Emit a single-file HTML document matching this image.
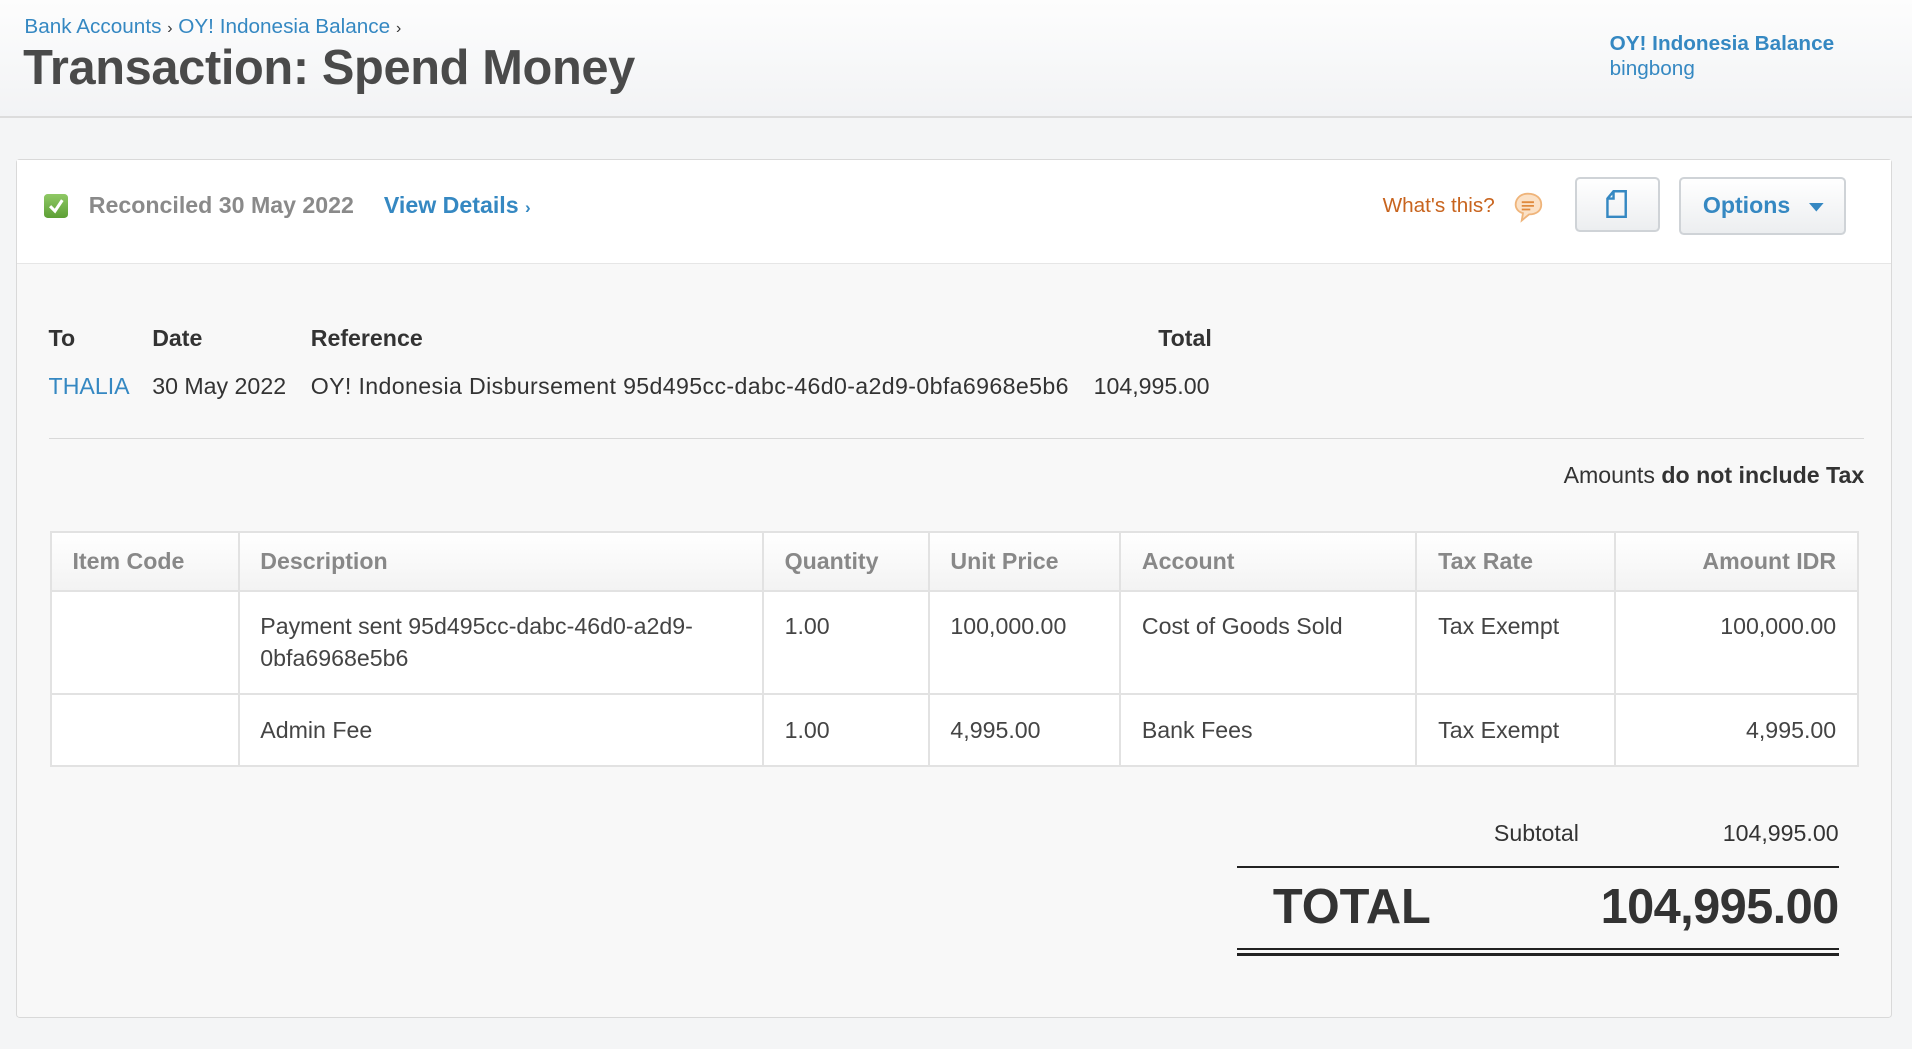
<!DOCTYPE html>
<html><head><meta charset="utf-8"><style>
html,body{margin:0;padding:0;}
body{width:1568px;height:860px;zoom:1.2194;background:#f4f5f6;font-family:"Liberation Sans",Arial,sans-serif;color:#333;position:relative;overflow:hidden;}
.abs{position:absolute;white-space:nowrap;}
.hdr{position:absolute;left:0;top:0;width:1568px;height:95px;background:linear-gradient(#fdfdfd,#f2f3f5);border-bottom:2px solid #dcdcdc;}
a,.blue{color:#3588c2;text-decoration:none;}
.panel{position:absolute;left:13px;top:130px;width:1537px;height:703px;border:1px solid #d9d9d9;border-radius:3px;background:#f8f8f8;}
.ptop{position:absolute;left:0;top:0;right:0;height:85px;background:#fff;border-bottom:1px solid #e6e6e6;}
table{position:absolute;left:27px;top:305px;width:1482px;table-layout:fixed;border-collapse:collapse;background:#fff;font-size:19px;}
td,th{border:2px solid #e2e2e2;padding:0 17px;text-align:left;vertical-align:top;overflow:hidden;}
th{height:46px;vertical-align:middle;color:#888;background:linear-gradient(#fff,#f3f3f3);font-weight:bold;}
td{color:#444;padding-top:16px;line-height:26px;}
.r{text-align:right;}
</style></head><body>
<div class="hdr"></div>
<div class="abs" style="left:20px;top:12px;font-size:17px;color:#333;"><a>Bank Accounts</a> <span style="font-size:13px">›</span> <a>OY! Indonesia Balance</a> <span style="font-size:13px">›</span></div>
<div class="abs" style="left:19px;top:33px;font-size:40px;font-weight:bold;color:#4a4a4a;letter-spacing:-0.3px;">Transaction: Spend Money</div>
<div class="abs blue" style="left:1320px;top:26px;font-size:17px;font-weight:bold;">OY! Indonesia Balance</div>
<div class="abs blue" style="left:1320px;top:47px;font-size:17px;">bingbong</div>

<div class="panel">
 <div class="ptop">
  <div class="abs" style="left:22px;top:28px;width:20px;height:20px;border-radius:3px;background:linear-gradient(#8fc965,#5d9f35);"><svg width="20" height="20"><path d="M5 10 L9 14 L15 5" stroke="#fff" stroke-width="2.5" fill="none"/></svg></div>
  <div class="abs" style="left:59px;top:27px;font-size:19px;font-weight:bold;color:#8a8a8a;">Reconciled 30 May 2022</div>
  <div class="abs blue" style="left:301px;top:27px;font-size:19px;font-weight:bold;">View Details <span style="font-size:14px">›</span></div>
  <div class="abs" style="left:1120px;top:28px;font-size:17px;color:#c8641e;">What's this?</div>
  <svg class="abs" style="left:1226px;top:25px" width="26" height="28"><path d="M13 3 C20 3 24 7 24 12 C24 17 20 20 14 20 L8 25 L9 19 C5 18 3 15 3 12 C3 7 7 3 13 3Z" fill="#fbe1c6" stroke="#efb47a" stroke-width="1.5"/><path d="M8 10h10M8 13h10M8 16h7" stroke="#e08a3d" stroke-width="1.5"/></svg>
  <div class="abs" style="left:1278px;top:14px;width:66px;height:42px;border:2px solid #cfd3d7;border-radius:4px;background:linear-gradient(#fff,#eceef0);"><svg style="position:absolute;left:23px;top:9px" width="20" height="24"><path d="M7 1 H17 V22 H2 V7 Z M2 7 H7 V1" fill="none" stroke="#3588c2" stroke-width="2"/></svg></div>
  <div class="abs" style="left:1363px;top:14px;width:134px;height:45px;border:2px solid #cfd3d7;border-radius:4px;background:linear-gradient(#fff,#eceef0);"><span style="position:absolute;left:18px;top:11px;font-size:19px;font-weight:bold;color:#3588c2;">Options</span><svg style="position:absolute;left:105px;top:20px" width="12" height="8"><path d="M0 0 H12 L6 7Z" fill="#3588c2"/></svg></div>
 </div>
 <div class="abs" style="left:26px;top:136px;font-size:19px;font-weight:bold;">To</div>
 <div class="abs" style="left:111px;top:136px;font-size:19px;font-weight:bold;">Date</div>
 <div class="abs" style="left:241px;top:136px;font-size:19px;font-weight:bold;">Reference</div>
 <div class="abs" style="left:936px;top:136px;font-size:19px;font-weight:bold;">Total</div>
 <div class="abs blue" style="left:26px;top:175px;font-size:19px;">THALIA</div>
 <div class="abs" style="left:111px;top:175px;font-size:19px;">30 May 2022</div>
 <div class="abs" style="left:241px;top:175px;font-size:19px;letter-spacing:0.3px;">OY! Indonesia Disbursement 95d495cc-dabc-46d0-a2d9-0bfa6968e5b6</div>
 <div class="abs" style="left:883px;top:175px;font-size:19px;">104,995.00</div>
 <div class="abs" style="left:26px;top:228px;width:1489px;height:1px;background:#d9d9d9;"></div>
 <div class="abs" style="right:22px;top:248px;font-size:19px;">Amounts <b>do not include Tax</b></div>
 <table>
  <colgroup><col style="width:154px"><col style="width:430px"><col style="width:136px"><col style="width:157px"><col style="width:243px"><col style="width:163px"><col style="width:199px"></colgroup>
  <tr><th>Item Code</th><th>Description</th><th>Quantity</th><th>Unit Price</th><th>Account</th><th>Tax Rate</th><th class="r">Amount IDR</th></tr>
  <tr style="height:85px"><td></td><td>Payment sent 95d495cc-dabc-46d0-a2d9-<br>0bfa6968e5b6</td><td>1.00</td><td>100,000.00</td><td>Cost of Goods Sold</td><td>Tax Exempt</td><td class="r">100,000.00</td></tr>
  <tr style="height:59px"><td></td><td>Admin Fee</td><td>1.00</td><td>4,995.00</td><td>Bank Fees</td><td>Tax Exempt</td><td class="r">4,995.00</td></tr>
 </table>
 <div class="abs" style="right:256px;top:542px;font-size:19px;">Subtotal</div>
 <div class="abs" style="right:43px;top:542px;font-size:19px;">104,995.00</div>
 <div class="abs" style="left:1001px;top:579px;width:493px;height:2px;background:#222;"></div>
 <div class="abs" style="left:1030px;top:590px;font-size:40px;font-weight:bold;color:#333;">TOTAL</div>
 <div class="abs" style="right:43px;top:590px;font-size:40px;font-weight:bold;color:#333;letter-spacing:-0.5px;">104,995.00</div>
 <div class="abs" style="left:1001px;top:647px;width:493px;height:1px;background:#222;"></div>
 <div class="abs" style="left:1001px;top:651px;width:493px;height:2px;background:#222;"></div>
</div>
</body></html>
